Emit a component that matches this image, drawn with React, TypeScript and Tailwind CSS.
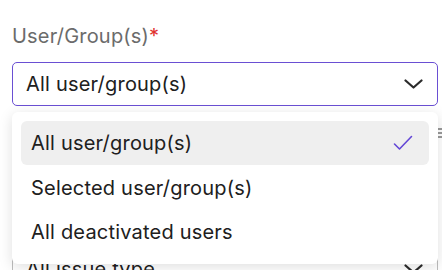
import { useState } from "react";

const OPTIONS = [
  "All user/group(s)",
  "Selected user/group(s)",
  "All deactivated users",
];

function Chevron() {
  return (
    <svg width="19" height="10" viewBox="0 0 19 10" fill="none" className="text-[#2b2b2b]">
      <path d="M1.5 1.5 9.5 8.5 17.5 1.5" stroke="currentColor" strokeWidth="2.2" strokeLinecap="round" strokeLinejoin="round" />
    </svg>
  );
}

function Check() {
  return (
    <svg width="20" height="16" viewBox="0 0 20 16" fill="none" className="text-[#6347d6]">
      <path d="M1.5 9 6.5 14 18.5 1.5" stroke="currentColor" strokeWidth="1.6" strokeLinecap="round" strokeLinejoin="round" />
    </svg>
  );
}

export default function App() {
  const [selected, setSelected] = useState(0);

  return (
    <div
      className="relative w-[442px] h-[270px] overflow-hidden bg-white pl-3 pr-1 pt-[22px]"
      style={{ fontFamily: "Inter, 'Noto Sans', sans-serif" }}
    >
      <label className="block text-[20px] leading-[28px] tracking-[0.2px] text-[#6b6b6b]">
        User/Group(s)<span className="text-[#e0302f]">*</span>
      </label>

      <div className="relative mt-3">
        <button className="flex h-[44px] w-full items-center justify-between rounded-[5px] border border-[#6a4fd3] pl-[13px] pr-[14px] text-left text-[20px] tracking-[0.2px] text-[#202020]">
          <span>{OPTIONS[selected]}</span>
          <Chevron />
        </button>

        <div className="absolute left-0 right-0 top-[50px] z-10 rounded-[6px] bg-white px-[9px] pt-[9px] pb-[11px] shadow-[0_3px_14px_rgba(0,0,0,0.13)]">
          {OPTIONS.map((opt, i) => (
            <div
              key={opt}
              onClick={() => setSelected(i)}
              className={`flex h-[44px] items-center justify-between rounded-[6px] pl-[10px] pr-[16px] text-[20px] tracking-[0.2px] text-[#202020] ${
                i === selected ? "bg-[#efefef]" : ""
              }`}
            >
              <span className={i === 0 ? "" : "pt-[2px]"}>{opt}</span>
              {i === selected && <Check />}
            </div>
          ))}
        </div>

        <div className="mt-[141px] flex h-[44px] w-full items-center justify-between rounded-[5px] border border-[#bdbdbd] pl-[13px] pr-[14px] text-[20px] tracking-[0.2px] text-[#202020]">
          <span>All issue type</span>
          <Chevron />
        </div>
      </div>

      <div className="absolute right-0 top-[128px] flex flex-col gap-[2px]">
        <div className="h-[2px] w-[4px] bg-[#9a9a9a]" />
        <div className="h-[2px] w-[4px] bg-[#9a9a9a]" />
        <div className="h-[2px] w-[4px] bg-[#9a9a9a]" />
      </div>
    </div>
  );
}
